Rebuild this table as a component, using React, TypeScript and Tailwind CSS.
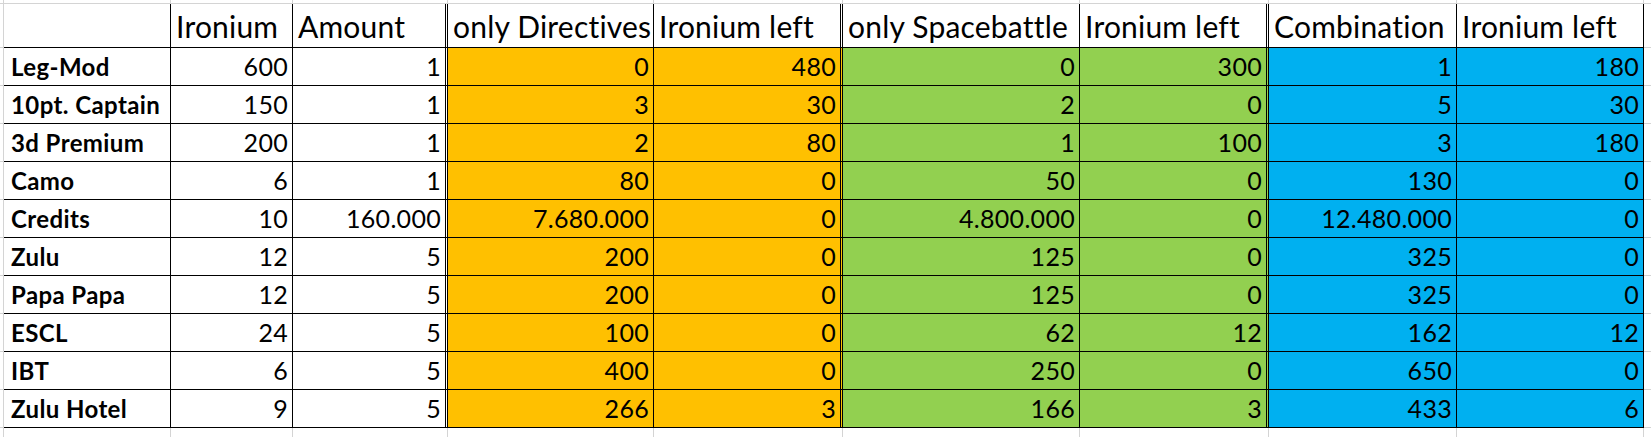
const headers = [
  "Ironium",
  "Amount",
  "only Directives",
  "Ironium left",
  "only Spacebattle",
  "Ironium left",
  "Combination",
  "Ironium left",
];

const rows: string[][] = [
  ["Leg-Mod", "600", "1", "0", "480", "0", "300", "1", "180"],
  ["10pt. Captain", "150", "1", "3", "30", "2", "0", "5", "30"],
  ["3d Premium", "200", "1", "2", "80", "1", "100", "3", "180"],
  ["Camo", "6", "1", "80", "0", "50", "0", "130", "0"],
  ["Credits", "10", "160.000", "7.680.000", "0", "4.800.000", "0", "12.480.000", "0"],
  ["Zulu", "12", "5", "200", "0", "125", "0", "325", "0"],
  ["Papa Papa", "12", "5", "200", "0", "125", "0", "325", "0"],
  ["ESCL", "24", "5", "100", "0", "62", "12", "162", "12"],
  ["IBT", "6", "5", "400", "0", "250", "0", "650", "0"],
  ["Zulu Hotel", "9", "5", "266", "3", "166", "3", "433", "6"],
];

// right border per column A..I (double lines close each block)
const rightBorder = [
  "border-r border-r-black",
  "border-r border-r-black",
  "border-r-[3px] border-double border-r-black",
  "border-r border-r-black",
  "border-r-[3px] border-double border-r-black",
  "border-r border-r-black",
  "border-r-[3px] border-double border-r-black",
  "border-r border-r-black",
  "border-r border-r-black",
];

const fill = [
  "bg-white",
  "bg-white",
  "bg-white",
  "bg-[#ffc000]",
  "bg-[#ffc000]",
  "bg-[#92d050]",
  "bg-[#92d050]",
  "bg-[#00b0f0]",
  "bg-[#00b0f0]",
];

const grid = "border-[#d4d4d4]";

export default function App() {
  return (
    <div
      className="w-[1651px] h-[437px] overflow-hidden bg-white text-black"
      style={{ fontFamily: "Lato, 'Open Sans', sans-serif" }}
    >
      <div className="grid grid-cols-[4px_167px_122px_155px_206px_189px_237px_189px_188px_187px_1fr] grid-rows-[4px_44px_repeat(10,38px)_10px]">
        {/* top gridline strip */}
        {Array.from({ length: 11 }).map((_, i) => (
          <div key={`t${i}`} className={`border-b ${i < 10 ? "border-r" : ""} ${grid}`} />
        ))}

        {/* header row */}
        <div className={`border-r border-b ${grid}`} />
        <div className="border-b border-b-black border-r border-r-black" />
        {headers.map((h, i) => (
          <div
            key={`h${i}`}
            className={`flex items-end pl-[5px] pb-[3px] border-b border-b-black ${rightBorder[i + 1]} text-[30px] leading-[36px] tracking-[0.2px] whitespace-nowrap overflow-hidden`}
          >
            {h}
          </div>
        ))}
        <div className={`border-b ${grid}`} />

        {/* data rows */}
        {rows.map((r, ri) => (
          <div key={`r${ri}`} className="contents">
            <div className={`border-r border-b ${grid}`} />
            {r.map((v, ci) => (
              <div
                key={ci}
                className={`flex items-end pb-[4px] border-b border-b-black ${rightBorder[ci]} ${fill[ci]} whitespace-nowrap ${
                  ci === 0
                    ? "pl-[7px] font-bold justify-start text-[24px] leading-[29px] tracking-[0.4px]"
                    : "pr-[4px] justify-end text-[25px] leading-[30px] tracking-[0.3px]"
                }`}
              >
                {v}
              </div>
            ))}
            <div className={`border-b ${grid}`} />
          </div>
        ))}

        {/* bottom gridline strip */}
        {Array.from({ length: 11 }).map((_, i) => (
          <div key={`b${i}`} className={`${i < 10 ? "border-r" : ""} ${grid}`} />
        ))}
      </div>
    </div>
  );
}
